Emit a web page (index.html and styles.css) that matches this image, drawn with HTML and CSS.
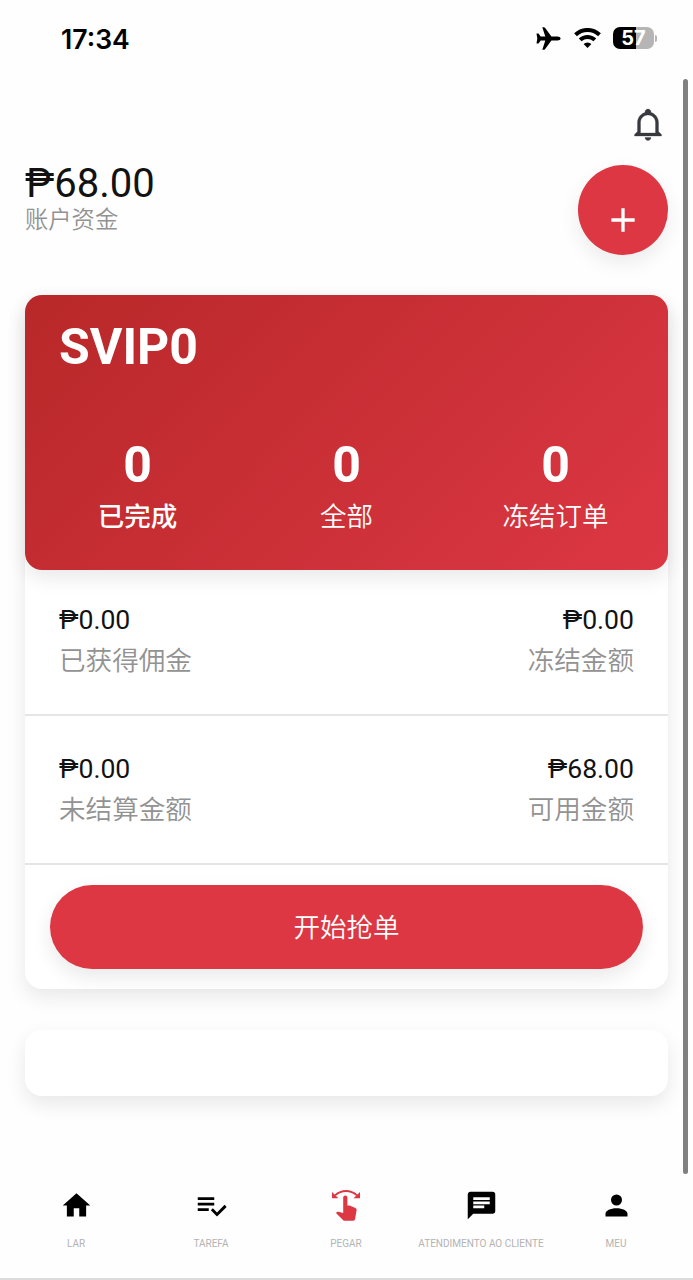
FILE: index.html
```
<!DOCTYPE html>
<html lang="zh-CN">
<head>
  <meta charset="UTF-8">
  <meta name="viewport" content="width=device-width, initial-scale=1.0">
  <title>SVIP0</title>
  <link rel="stylesheet" href="styles.css">
</head>
<body>
  <div class="phone">
    <header class="status-bar">
      <span class="time">17:34</span>
      <div class="status-icons">
        <svg class="plane" viewBox="0 0 25 23">
          <path d="M24.6 11.5c0-1.2-1.4-2-3.2-2h-6L9.2 1.1C8.800.5 8.300.3 7.800.3H6.300l3 9.200H4.700L2.500 6.600H.500l.8 4.900-.8 4.900h2l2.200-2.900h4.600l-3 9.200h1.500c.5 0 1-.2 1.400-.8l6.200-8.400h6c1.800 0 3.200-.8 3.200-2z"/>
        </svg>
        <svg class="wifi" viewBox="0 0 27 20">
          <path class="wave" d="M1.500 6.800a17.300 17.300 0 0 1 24 0M6.200 11.900a10.400 10.400 0 0 1 14.600 0"/>
          <path d="M13.500 19.900l-3.900-3.900a5.500 5.500 0 0 1 7.800 0z"/>
        </svg>
        <div class="battery"><span>57</span></div>
        <i class="battery-cap"></i>
      </div>
    </header>

    <main class="content">
      <div class="toolbar">
        <svg class="bell" viewBox="0 0 24 24">
          <path d="M10 21H14C14 22.1 13.1 23 12 23S10 22.1 10 21M21 19V20H3V19L5 17V11C5 7.900 7.030 5.170 10 4.290V4C10 2.900 10.900 2 12 2S14 2.900 14 4V4.290C16.970 5.170 19 7.900 19 11V17L21 19M17 11C17 8.240 14.760 6 12 6S7 8.240 7 11V18H17V11Z"/>
        </svg>
      </div>

      <section class="account">
        <div>
          <div class="balance">₱68.00</div>
          <div class="balance-label">账户资金</div>
        </div>
        <button class="add">
          <svg viewBox="0 0 24 24"><path d="M19 13H13V19H11V13H5V11H11V5H13V11H19V13Z"/></svg>
        </button>
      </section>

      <section class="card">
        <div class="vip">
          <h1>SVIP0</h1>
          <div class="orders">
            <div class="order active"><b>0</b><span>已完成</span></div>
            <div class="order"><b>0</b><span>全部</span></div>
            <div class="order"><b>0</b><span>冻结订单</span></div>
          </div>
        </div>
        <div class="row">
          <div class="cell"><p>₱0.00</p><span>已获得佣金</span></div>
          <div class="cell right"><p>₱0.00</p><span>冻结金额</span></div>
        </div>
        <div class="row">
          <div class="cell"><p>₱0.00</p><span>未结算金额</span></div>
          <div class="cell right"><p>₱68.00</p><span>可用金额</span></div>
        </div>
        <div class="action">
          <button class="start">开始抢单</button>
        </div>
      </section>

      <section class="card empty"></section>
    </main>

    <nav class="tabs">
      <a class="tab">
        <svg viewBox="0 0 24 24"><path d="M10 20V14H14V20H19V12H22L12 3L2 12H5V20H10Z"/></svg>
        <span>LAR</span>
      </a>
      <a class="tab">
        <svg viewBox="0 0 24 24"><path d="M14 10H2V12H14V10M14 6H2V8H14V6M2 16H10V14H2V16M21.500 11.500L23 13L16 20L11.500 15.500L13 14L16 17L21.500 11.500Z"/></svg>
        <span>TAREFA</span>
      </a>
      <a class="tab selected">
        <svg class="swipe" viewBox="0 0 28 31">
          <path class="arc" d="M3 5.400Q8 1 14 1T25 5.400"/>
          <path d="M0 2V8.200H6.400ZM28 2V8.200H21.600ZM13.300 5.500C12 5.500 11.200 6.500 11.200 7.600V22.900L6.200 21.800C5.500 21.600 5 21.800 4.600 22.200L4 23L11 29.900C11.600 30.500 12.200 30.800 13 30.800H20.600C22 30.800 22.900 30 23.100 28.700L24.600 20.200C24.800 19.200 24.300 18.300 23.400 17.900L17.700 15.400H15.400V7.600C15.400 6.500 14.600 5.500 13.300 5.500Z"/>
        </svg>
        <span>PEGAR</span>
      </a>
      <a class="tab">
        <svg viewBox="0 0 24 24"><path d="M20 2A2 2 0 0 1 22 4V16A2 2 0 0 1 20 18H6L2 22V4C2 2.890 2.900 2 4 2H20M6 6V8H18V6H6M6 9V11H18V9H6M6 12V14H14V12H6Z"/></svg>
        <span>ATENDIMENTO AO CLIENTE</span>
      </a>
      <a class="tab">
        <svg viewBox="0 0 24 24"><path d="M12 4A4 4 0 0 1 16 8A4 4 0 0 1 12 12A4 4 0 0 1 8 8A4 4 0 0 1 12 4M12 14C16.420 14 20 15.790 20 18V20H4V18C4 15.790 7.580 14 12 14Z"/></svg>
        <span>MEU</span>
      </a>
    </nav>
    <div class="scrollbar"></div>
  </div>
</body>
</html>
```

FILE: styles.css
```
* {
  box-sizing: border-box;
}
body {
  margin: 0;
  background: #fefefe;
  color: #121212;
  font-family: Roboto, "Noto Sans CJK SC", sans-serif;
}
h1, p {
  margin: 0;
}
button {
  border: none;
  padding: 0;
  font-family: inherit;
  color: #fff;
  background: #dc3743;
}
svg {
  display: block;
}
.phone {
  position: relative;
  display: flex;
  flex-direction: column;
  height: 1280px;
  overflow: hidden;
}

/* status bar */
.status-bar {
  display: flex;
  justify-content: space-between;
  height: 79px;
  padding: 0 36px 3px 61px;
  align-items: center;
  color: #000;
}
.time {
  padding-top: 1px;
  font: 600 26.6px/30px Inter, sans-serif;
}
.status-icons {
  display: flex;
  align-items: center;
}
.plane {
  width: 25px;
  height: 23px;
  margin-right: 13px;
}
.wifi {
  width: 27px;
  height: 20px;
  margin-right: 12px;
}
.wave {
  fill: none;
  stroke: #000;
  stroke-width: 4;
}
.battery {
  width: 41px;
  height: 22px;
  border-radius: 7px;
  background: linear-gradient(90deg, #000 57%, #b5b5b5 57%);
  color: #fff;
  text-align: center;
  font: 700 20px/22px Inter, sans-serif;
}
.battery-cap {
  width: 2px;
  height: 7px;
  margin-left: 1px;
  border-radius: 0 3px 3px 0;
  background: #b5b5b5;
}

/* account */
.content {
  flex: 1;
  padding: 0 25px;
}
.toolbar {
  display: flex;
  justify-content: flex-end;
  padding: 27px 2px 0 0;
}
.bell {
  width: 36px;
  height: 36px;
  fill: #37393e;
  stroke: #37393e;
  stroke-width: 0.2;
}
.account {
  display: flex;
  justify-content: space-between;
  margin-top: 23px;
  height: 130px;
}
.balance {
  padding-top: 1px;
  font-size: 40px;
  line-height: 36px;
}
.balance-label {
  font-size: 23.3px;
  line-height: 36px;
  font-weight: 350;
  color: #929292;
}
.add {
  width: 90px;
  height: 90px;
  padding-top: 20px;
  border-radius: 50%;
  box-shadow: 0 8px 20px rgba(0, 0, 0, 0.08);
}
.add svg {
  width: 40px;
  height: 40px;
  margin: 0 auto;
  fill: #fff;
}

/* cards */
.card {
  border-radius: 17px;
  background: #fff;
  box-shadow: 0 8px 20px rgba(0, 0, 0, 0.09);
}
.vip {
  height: 275px;
  padding: 22px 8px 0;
  border-radius: 17px;
  background: linear-gradient(135deg, #b82829, #dc3743);
  box-shadow: 0 8px 20px rgba(0, 0, 0, 0.09);
  color: #fff;
}
.vip h1 {
  padding-left: 26px;
  font-size: 50px;
  line-height: 60px;
  font-weight: 700;
}
.orders {
  display: grid;
  grid-template-columns: repeat(3, 1fr);
  margin-top: 58px;
  text-align: center;
}
.order b {
  display: block;
  font-size: 50px;
  line-height: 60px;
}
.order span {
  display: block;
  font-size: 26.5px;
  line-height: 44px;
  font-weight: 350;
}
.order.active span {
  font-weight: 500;
}
.row {
  display: flex;
  justify-content: space-between;
  height: 149px;
  padding: 34px 34px 0;
  border-bottom: 2px solid #e5e5e5;
}
.vip + .row {
  height: 146px;
  padding-top: 31px;
}
.cell p {
  font-size: 26.6px;
  line-height: 38px;
}
.cell span {
  display: block;
  font-size: 26.6px;
  line-height: 44px;
  font-weight: 350;
  color: #929292;
}
.cell.right {
  text-align: right;
}
.action {
  padding: 20px 25px 20px;
}
.start {
  display: block;
  width: 100%;
  height: 84px;
  padding-bottom: 4px;
  border-radius: 42px;
  font-size: 26.5px;
  font-weight: 350;
  box-shadow: 0 8px 20px rgba(0, 0, 0, 0.09);
}
.empty {
  height: 66px;
  margin-top: 41px;
}

/* bottom navigation */
.tabs {
  display: grid;
  grid-template-columns: repeat(5, 135px);
  justify-content: center;
  height: 106px;
  padding: 15px 1px 0 0;
  border-bottom: 2px solid #dcdcdc;
}
.tab {
  display: flex;
  flex-direction: column;
  align-items: center;
  color: #b3b3b3;
}
.tab svg {
  width: 33px;
  height: 33px;
  fill: #000;
}
.tab .swipe {
  width: 28px;
  height: 31px;
  margin: 1px 0;
}
.tab.selected svg {
  fill: #dc3743;
}
.tab .arc {
  fill: none;
  stroke: #dc3743;
  stroke-width: 1.9;
}
.tab span {
  margin-top: 15px;
  font-size: 10px;
  line-height: 14px;
  white-space: nowrap;
}
.scrollbar {
  position: absolute;
  top: 79px;
  right: 5px;
  width: 5px;
  height: 1095px;
  border-radius: 3px;
  background: #808080;
}
```
